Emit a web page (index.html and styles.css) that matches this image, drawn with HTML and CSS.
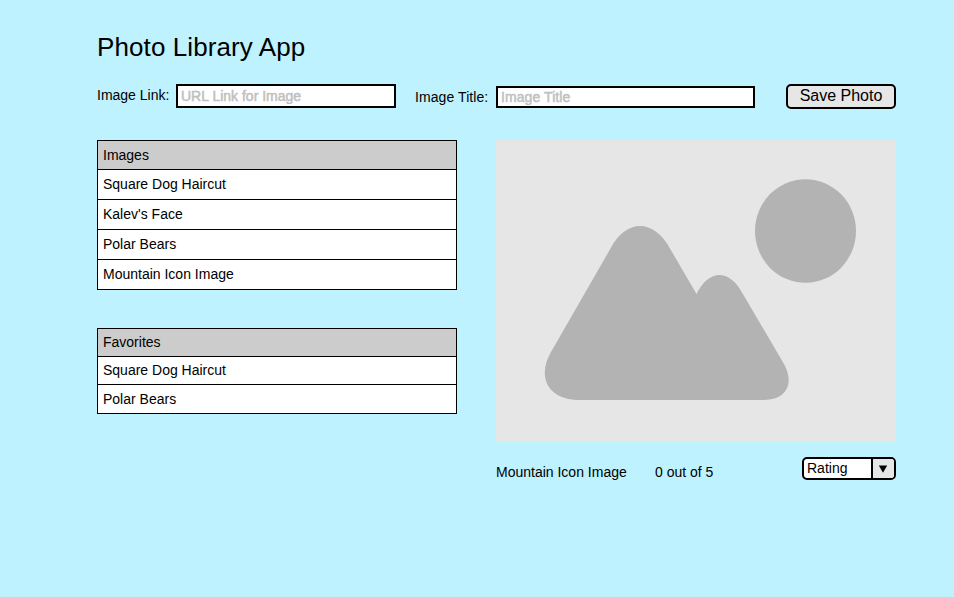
FILE: index.html
```html
<!DOCTYPE html>
<html lang="en">
<head>
<meta charset="utf-8">
<title>Photo Library App</title>
<link rel="stylesheet" href="styles.css">
</head>
<body>
<main class="app">
  <h1 class="title">Photo Library App</h1>
  <form class="form">
    <label class="label label-link" for="link">Image Link:</label>
    <input class="input input-link" id="link" type="text" placeholder="URL Link for Image">
    <label class="label label-title" for="name">Image Title:</label>
    <input class="input input-title" id="name" type="text" placeholder="Image Title">
    <button class="save" type="button">Save Photo</button>
  </form>
  <div class="columns">
    <div class="lists">
      <ul class="list images">
        <li class="head">Images</li>
        <li>Square Dog Haircut</li>
        <li>Kalev's Face</li>
        <li>Polar Bears</li>
        <li>Mountain Icon Image</li>
      </ul>
      <ul class="list favorites">
        <li class="head">Favorites</li>
        <li>Square Dog Haircut</li>
        <li>Polar Bears</li>
      </ul>
    </div>
    <section class="viewer">
      <svg class="photo" viewBox="0 0 400 301" width="400" height="301">
        <ellipse cx="309.5" cy="91" rx="50.5" ry="51.8"/>
        <path d="M84 260C53 260 40 238 55 212L114.500 108.500C130 78.500 158 78.500 174 108.500L200.500 154C213 129 233 129 246 152.500L288 224C299 244 290 260 268 260Z"/>
      </svg>
      <div class="details">
        <span class="name">Mountain Icon Image</span>
        <span class="score">0 out of 5</span>
        <div class="rating" role="button">
          <span class="rating-text">Rating</span>
          <span class="rating-arrow"><svg width="10" height="8" viewBox="0 0 10 8"><path d="M.8.500H9.200L5 7.800Z"/></svg></span>
        </div>
      </div>
    </section>
  </div>
</main>
</body>
</html>
```
FILE: styles.css
```css
* { box-sizing: border-box; }
body {
  margin: 0;
  background: #bef2ff;
  color: #000;
  font: 14px/16px "Liberation Sans", Arial, sans-serif;
}
.app { width: 799px; margin-left: 97px; padding-top: 32px; }
.title { margin: 0; font-size: 26px; font-weight: 400; line-height: 30px; letter-spacing: .1px; }
.form { display: flex; align-items: flex-start; height: 56px; margin-top: 22px; }
.label { white-space: nowrap; }
.label-link { width: 79px; margin-top: 3px; }
.label-title { width: 81px; margin: 5px 0 0 19px; letter-spacing: .08px; }
.input {
  margin: 0;
  padding: 0 3px;
  border: 2px solid #000;
  border-radius: 0;
  background: #fff;
  font: inherit;
  outline: 0;
}
.input::placeholder { color: #c0c0c0; opacity: 1; -webkit-text-stroke: .5px #c0c0c0; }
.input-link { width: 220px; height: 24px; }
.input-title { width: 259px; height: 22px; margin-top: 2px; letter-spacing: .08px; }
.save {
  width: 110px;
  height: 25px;
  margin-left: auto;
  padding: 0 0 2px;
  border: 2px solid #000;
  border-radius: 5px;
  background: #e6e6e6;
  color: #000;
  font: 16px/18px "Liberation Sans", Arial, sans-serif;
}
.columns { display: flex; justify-content: space-between; }
.lists { width: 360px; }
.list {
  display: grid;
  gap: 1px;
  margin: 0;
  padding: 1px;
  background: #000;
  list-style: none;
}
.list li { padding: 6px 0 0 5px; background: #fff; }
.list .head { background: #ccc; }
.images { grid-template-rows: 28px repeat(4, 29px); }
.favorites { grid-template-rows: 27px 27px 28px; margin-top: 38px; }
.favorites li:not(:last-child) { padding-top: 5px; }
.viewer { width: 400px; }
.photo { display: block; background: #e6e6e6; fill: #b3b3b3; }
.details { display: flex; align-items: flex-start; margin-top: 16px; }
.name { width: 159px; margin-top: 7px; }
.score { margin-top: 7px; }
.rating {
  display: flex;
  width: 94px;
  height: 23px;
  margin-left: auto;
  overflow: hidden;
  border: 2px solid #000;
  border-radius: 5px;
  background: #fff;
}
.rating-text { flex: 1; padding: 1px 0 0 3px; }
.rating-arrow {
  display: flex;
  align-items: center;
  justify-content: center;
  width: 23px;
  padding-right: 1px;
  border-left: 2px solid #000;
  background: #e6e6e6;
}
```
